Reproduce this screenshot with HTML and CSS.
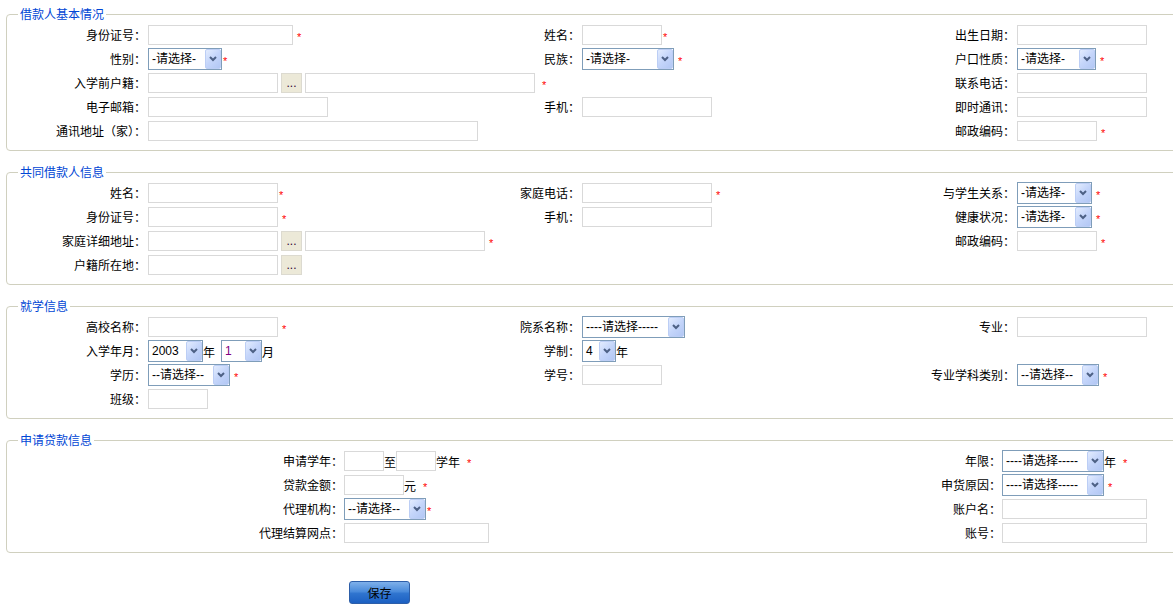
FILE: index.html
```html
<!DOCTYPE html>
<html lang="zh-CN">
<head>
<meta charset="utf-8">
<title>借款人信息</title>
<link rel="stylesheet" href="styles.css">
</head>
<body>
<div class="page">

<fieldset class="box">
  <legend class="box-title">借款人基本情况</legend>
  <div class="grid6">
    <div class="lbl">身份证号：</div>
    <div class="fld"><input class="txt w145" type="text"><span class="req">*</span></div>
    <div class="lbl">姓名：</div>
    <div class="fld"><input class="txt w80" type="text"><span class="req tight">*</span></div>
    <div class="lbl">出生日期：</div>
    <div class="fld"><input class="txt w130" type="text"></div>

    <div class="lbl">性别：</div>
    <div class="fld"><span class="sel w74"><span class="sel-text">-请选择-</span><span class="sel-btn"><svg width="8" height="6" viewBox="0 0 8 6"><path d="M1 1 L4 4 L7 1" fill="none" stroke="#4d6185" stroke-width="2"/></svg></span></span><span class="req tight">*</span></div>
    <div class="lbl">民族：</div>
    <div class="fld"><span class="sel w92"><span class="sel-text">-请选择-</span><span class="sel-btn"><svg width="8" height="6" viewBox="0 0 8 6"><path d="M1 1 L4 4 L7 1" fill="none" stroke="#4d6185" stroke-width="2"/></svg></span></span><span class="req">*</span></div>
    <div class="lbl">户口性质：</div>
    <div class="fld"><span class="sel w79"><span class="sel-text">-请选择-</span><span class="sel-btn"><svg width="8" height="6" viewBox="0 0 8 6"><path d="M1 1 L4 4 L7 1" fill="none" stroke="#4d6185" stroke-width="2"/></svg></span></span><span class="req">*</span></div>

    <div class="lbl">入学前户籍：</div>
    <div class="fld"><input class="txt w130" type="text"><button class="pick" type="button">...</button><input class="txt w230 after-pick" type="text"><span class="req wide">*</span></div>
    <div class="lbl"></div>
    <div class="fld"></div>
    <div class="lbl">联系电话：</div>
    <div class="fld"><input class="txt w130" type="text"></div>

    <div class="lbl">电子邮箱：</div>
    <div class="fld"><input class="txt w180" type="text"></div>
    <div class="lbl">手机：</div>
    <div class="fld"><input class="txt w130" type="text"></div>
    <div class="lbl">即时通讯：</div>
    <div class="fld"><input class="txt w130" type="text"></div>

    <div class="lbl">通讯地址（家）：</div>
    <div class="fld"><input class="txt w330" type="text"></div>
    <div class="lbl"></div>
    <div class="fld"></div>
    <div class="lbl">邮政编码：</div>
    <div class="fld"><input class="txt w80" type="text"><span class="req">*</span></div>
  </div>
</fieldset>

<fieldset class="box">
  <legend class="box-title">共同借款人信息</legend>
  <div class="grid6">
    <div class="lbl">姓名：</div>
    <div class="fld"><input class="txt w130" type="text"><span class="req tight">*</span></div>
    <div class="lbl">家庭电话：</div>
    <div class="fld"><input class="txt w130" type="text"><span class="req">*</span></div>
    <div class="lbl">与学生关系：</div>
    <div class="fld"><span class="sel w75"><span class="sel-text">-请选择-</span><span class="sel-btn"><svg width="8" height="6" viewBox="0 0 8 6"><path d="M1 1 L4 4 L7 1" fill="none" stroke="#4d6185" stroke-width="2"/></svg></span></span><span class="req">*</span></div>

    <div class="lbl">身份证号：</div>
    <div class="fld"><input class="txt w130" type="text"><span class="req">*</span></div>
    <div class="lbl">手机：</div>
    <div class="fld"><input class="txt w130" type="text"></div>
    <div class="lbl">健康状况：</div>
    <div class="fld"><span class="sel w75"><span class="sel-text">-请选择-</span><span class="sel-btn"><svg width="8" height="6" viewBox="0 0 8 6"><path d="M1 1 L4 4 L7 1" fill="none" stroke="#4d6185" stroke-width="2"/></svg></span></span><span class="req">*</span></div>

    <div class="lbl">家庭详细地址：</div>
    <div class="fld"><input class="txt w130" type="text"><button class="pick" type="button">...</button><input class="txt w180 after-pick" type="text"><span class="req">*</span></div>
    <div class="lbl"></div>
    <div class="fld"></div>
    <div class="lbl">邮政编码：</div>
    <div class="fld"><input class="txt w80" type="text"><span class="req">*</span></div>

    <div class="lbl">户籍所在地：</div>
    <div class="fld"><input class="txt w130" type="text"><button class="pick" type="button">...</button></div>
    <div class="lbl"></div>
    <div class="fld"></div>
    <div class="lbl"></div>
    <div class="fld"></div>
  </div>
</fieldset>

<fieldset class="box">
  <legend class="box-title">就学信息</legend>
  <div class="grid6">
    <div class="lbl">高校名称：</div>
    <div class="fld"><input class="txt w130" type="text"><span class="req">*</span></div>
    <div class="lbl">院系名称：</div>
    <div class="fld"><span class="sel w103"><span class="sel-text">----请选择-----</span><span class="sel-btn"><svg width="8" height="6" viewBox="0 0 8 6"><path d="M1 1 L4 4 L7 1" fill="none" stroke="#4d6185" stroke-width="2"/></svg></span></span></div>
    <div class="lbl">专业：</div>
    <div class="fld"><input class="txt w130" type="text"></div>

    <div class="lbl">入学年月：</div>
    <div class="fld"><span class="sel w55"><span class="sel-text">2003</span><span class="sel-btn"><svg width="8" height="6" viewBox="0 0 8 6"><path d="M1 1 L4 4 L7 1" fill="none" stroke="#4d6185" stroke-width="2"/></svg></span></span><span class="unit">年</span><span class="sel w41 gap6"><span class="sel-text purple">1</span><span class="sel-btn"><svg width="8" height="6" viewBox="0 0 8 6"><path d="M1 1 L4 4 L7 1" fill="none" stroke="#4d6185" stroke-width="2"/></svg></span></span><span class="unit">月</span></div>
    <div class="lbl">学制：</div>
    <div class="fld"><span class="sel w34"><span class="sel-text">4</span><span class="sel-btn"><svg width="8" height="6" viewBox="0 0 8 6"><path d="M1 1 L4 4 L7 1" fill="none" stroke="#4d6185" stroke-width="2"/></svg></span></span><span class="unit">年</span></div>
    <div class="lbl"></div>
    <div class="fld"></div>

    <div class="lbl">学历：</div>
    <div class="fld"><span class="sel w82"><span class="sel-text">--请选择--</span><span class="sel-btn"><svg width="8" height="6" viewBox="0 0 8 6"><path d="M1 1 L4 4 L7 1" fill="none" stroke="#4d6185" stroke-width="2"/></svg></span></span><span class="req">*</span></div>
    <div class="lbl">学号：</div>
    <div class="fld"><input class="txt w80" type="text"></div>
    <div class="lbl">专业学科类别：</div>
    <div class="fld"><span class="sel w82"><span class="sel-text">--请选择--</span><span class="sel-btn"><svg width="8" height="6" viewBox="0 0 8 6"><path d="M1 1 L4 4 L7 1" fill="none" stroke="#4d6185" stroke-width="2"/></svg></span></span><span class="req">*</span></div>

    <div class="lbl">班级：</div>
    <div class="fld"><input class="txt w60" type="text"></div>
    <div class="lbl"></div>
    <div class="fld"></div>
    <div class="lbl"></div>
    <div class="fld"></div>
  </div>
</fieldset>

<fieldset class="box">
  <legend class="box-title">申请贷款信息</legend>
  <div class="grid4">
    <div class="lbl">申请学年：</div>
    <div class="fld"><input class="txt w40" type="text"><span class="unit">至</span><input class="txt w40" type="text"><span class="unit">学年</span><span class="req wide">*</span></div>
    <div class="lbl">年限：</div>
    <div class="fld"><span class="sel w102"><span class="sel-text">----请选择-----</span><span class="sel-btn"><svg width="8" height="6" viewBox="0 0 8 6"><path d="M1 1 L4 4 L7 1" fill="none" stroke="#4d6185" stroke-width="2"/></svg></span></span><span class="unit">年</span><span class="req wide">*</span></div>

    <div class="lbl">贷款金额：</div>
    <div class="fld"><input class="txt w60" type="text"><span class="unit">元</span><span class="req wide">*</span></div>
    <div class="lbl">申货原因：</div>
    <div class="fld"><span class="sel w102"><span class="sel-text">----请选择-----</span><span class="sel-btn"><svg width="8" height="6" viewBox="0 0 8 6"><path d="M1 1 L4 4 L7 1" fill="none" stroke="#4d6185" stroke-width="2"/></svg></span></span><span class="req">*</span></div>

    <div class="lbl">代理机构：</div>
    <div class="fld"><span class="sel w82"><span class="sel-text">--请选择--</span><span class="sel-btn"><svg width="8" height="6" viewBox="0 0 8 6"><path d="M1 1 L4 4 L7 1" fill="none" stroke="#4d6185" stroke-width="2"/></svg></span></span><span class="req tight">*</span></div>
    <div class="lbl">账户名：</div>
    <div class="fld"><input class="txt w145" type="text"></div>

    <div class="lbl">代理结算网点：</div>
    <div class="fld"><input class="txt w145" type="text"></div>
    <div class="lbl">账号：</div>
    <div class="fld"><input class="txt w145" type="text"></div>
  </div>
</fieldset>

<div class="actions">
  <button class="save" type="button">保存</button>
</div>

</div>
</body>
</html>
```

FILE: styles.css
```css
html, body {
  margin: 0;
  padding: 0;
  overflow: hidden;
  background: #fff;
}

body {
  font: 12px/1.2 "Noto Sans CJK SC", "Liberation Sans", sans-serif;
  color: #000;
}

.page {
  padding-top: 8px;
}

.box {
  box-sizing: border-box;
  width: 1180px;
  margin: 0 0 0 6px;
  padding: 3px 0 7px 0;
  border: 1px solid #d0d0bf;
  border-radius: 4px;
  min-inline-size: 0;
}

.box + .box {
  margin-top: 15px;
}

.box-title {
  margin-left: 11px;
  padding: 0 2px;
  color: #0046d5;
  font-size: 12px;
  line-height: 12px;
}

.grid6 {
  display: grid;
  grid-template-columns: 139px 364px 70px 320px 115px 1fr;
  grid-auto-rows: 24px;
}

.grid4 {
  display: grid;
  grid-template-columns: 336px 537px 121px 1fr;
  grid-auto-rows: 24px;
}

.lbl {
  text-align: right;
  line-height: 24px;
  white-space: nowrap;
}

.fld {
  display: flex;
  align-items: center;
  white-space: nowrap;
  padding-left: 2px;
  min-width: 0;
}

.grid4 .fld {
  padding-left: 1px;
}

.txt {
  box-sizing: border-box;
  height: 20px;
  margin: 0;
  padding: 0 2px;
  border: 1px solid #d9d9d9;
  background: #fff;
  font: 12px "Liberation Sans", sans-serif;
  flex: none;
  outline: none;
}

.w40 { width: 40px; }
.w60 { width: 60px; }
.w80 { width: 80px; }
.w130 { width: 130px; }
.w145 { width: 145px; }
.w180 { width: 180px; }
.w230 { width: 230px; }
.w330 { width: 330px; }

.pick {
  box-sizing: border-box;
  width: 21px;
  height: 20px;
  margin: 0 0 0 3px;
  padding: 0;
  border: 1px solid #dcdad0;
  background: #ece9d8;
  color: #330033;
  font: 12px/18px "Liberation Sans", sans-serif;
  flex: none;
}

.after-pick {
  margin-left: 3px;
}

.sel {
  box-sizing: border-box;
  display: inline-flex;
  align-items: stretch;
  height: 22px;
  border: 1px solid #7f9db9;
  background: #fff;
  flex: none;
}

.w34 { width: 34px; }
.w41 { width: 41px; }
.w55 { width: 55px; }
.w74 { width: 74px; }
.w75 { width: 75px; }
.w79 { width: 79px; }
.w82 { width: 82px; }
.w92 { width: 92px; }
.w102 { width: 102px; }
.w103 { width: 103px; }

.sel-text {
  flex: 1;
  min-width: 0;
  overflow: hidden;
  padding-left: 3px;
  line-height: 20px;
  font: 12px/20px "Liberation Sans", "Noto Sans CJK SC", sans-serif;
  white-space: nowrap;
}

.sel-text.purple {
  color: #800080;
}

.sel-btn {
  box-sizing: border-box;
  width: 16px;
  flex: none;
  display: flex;
  align-items: center;
  justify-content: center;
  border: 1px solid #bccef5;
  border-radius: 2px;
  background: linear-gradient(135deg, #e3ecfe 0%, #c4d5fa 50%, #b2c7f4 100%);
}

.gap6 {
  margin-left: 6px;
}

.unit {
  flex: none;
  line-height: 20px;
  padding-top: 2px;
}

.req {
  flex: none;
  margin-left: 4px;
  padding-top: 5px;
  color: #ff0000;
  font: 11px/11px "Liberation Sans", sans-serif;
}

.req.tight {
  margin-left: 1px;
}

.req.wide {
  margin-left: 7px;
}

.actions {
  padding: 28px 0 0 349px;
}

.save {
  box-sizing: border-box;
  width: 61px;
  height: 23px;
  margin: 0;
  padding: 0;
  border: 1px solid #2d5ea8;
  border-radius: 3px;
  background: linear-gradient(#7eb0ea 0%, #4a8bdb 45%, #2f74cf 55%, #1c60c2 100%);
  color: #000;
  font: 12px/21px "Noto Sans CJK SC", sans-serif;
}
```
